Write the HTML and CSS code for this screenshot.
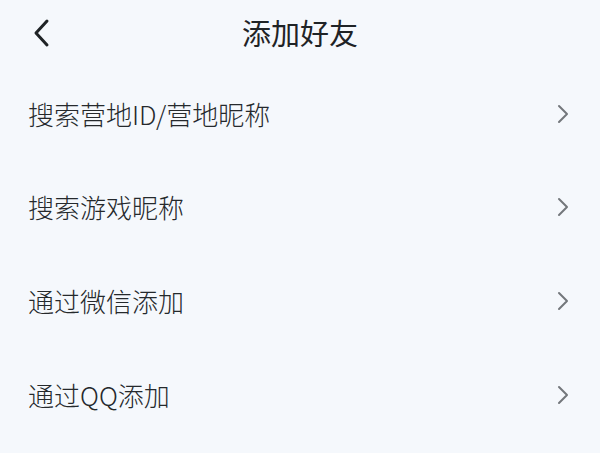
FILE: index.html
```html
<!DOCTYPE html>
<html lang="zh-CN">
<head>
<meta charset="utf-8">
<link rel="stylesheet" href="styles.css">
</head>
<body>
<div class="page">
  <header class="header">
    <svg class="back" width="20" height="30" viewBox="0 0 20 30"><polyline points="14,3 3,15 14,27" fill="none" stroke="#1f2326" stroke-width="3" stroke-linecap="round" stroke-linejoin="round"/></svg>
    <div class="title">添加好友</div>
  </header>
  <ul class="list">
    <li class="row"><span class="label">搜索营地ID/营地昵称</span><svg class="arrow" width="14" height="20" viewBox="0 0 14 20"><polyline points="3,2 11,10 3,18" fill="none" stroke="#73777b" stroke-width="2" stroke-linecap="round" stroke-linejoin="round"/></svg></li>
    <li class="row"><span class="label">搜索游戏昵称</span><svg class="arrow" width="14" height="20" viewBox="0 0 14 20"><polyline points="3,2 11,10 3,18" fill="none" stroke="#73777b" stroke-width="2" stroke-linecap="round" stroke-linejoin="round"/></svg></li>
    <li class="row"><span class="label">通过微信添加</span><svg class="arrow" width="14" height="20" viewBox="0 0 14 20"><polyline points="3,2 11,10 3,18" fill="none" stroke="#73777b" stroke-width="2" stroke-linecap="round" stroke-linejoin="round"/></svg></li>
    <li class="row"><span class="label">通过QQ添加</span><svg class="arrow" width="14" height="20" viewBox="0 0 14 20"><polyline points="3,2 11,10 3,18" fill="none" stroke="#73777b" stroke-width="2" stroke-linecap="round" stroke-linejoin="round"/></svg></li>
  </ul>
</div>
</body>
</html>
```
FILE: styles.css
```css
html, body {
  margin: 0;
  padding: 0;
  background: #f5f8fc;
}
.page {
  width: 600px;
  height: 453px;
  overflow: hidden;
  font-family: "Noto Sans CJK SC", "Noto Sans", sans-serif;
  color: #25292c;
}
.header {
  position: relative;
  height: 67px;
  display: flex;
  align-items: center;
  justify-content: center;
}
.back {
  position: absolute;
  left: 33px;
  top: 18px;
}
.title {
  font-size: 29px;
  font-weight: 400;
  line-height: 1;
  margin-top: -2px;
  color: #1f2326;
}
.list {
  list-style: none;
  margin: 0;
  padding: 0;
}
.row {
  height: 93.6px;
  display: flex;
  align-items: center;
  justify-content: space-between;
  padding: 0 30px 0 28px;
}
.label {
  font-size: 26px;
  font-weight: 300;
  line-height: 1;
}
.arrow {
  display: block;
}
```
